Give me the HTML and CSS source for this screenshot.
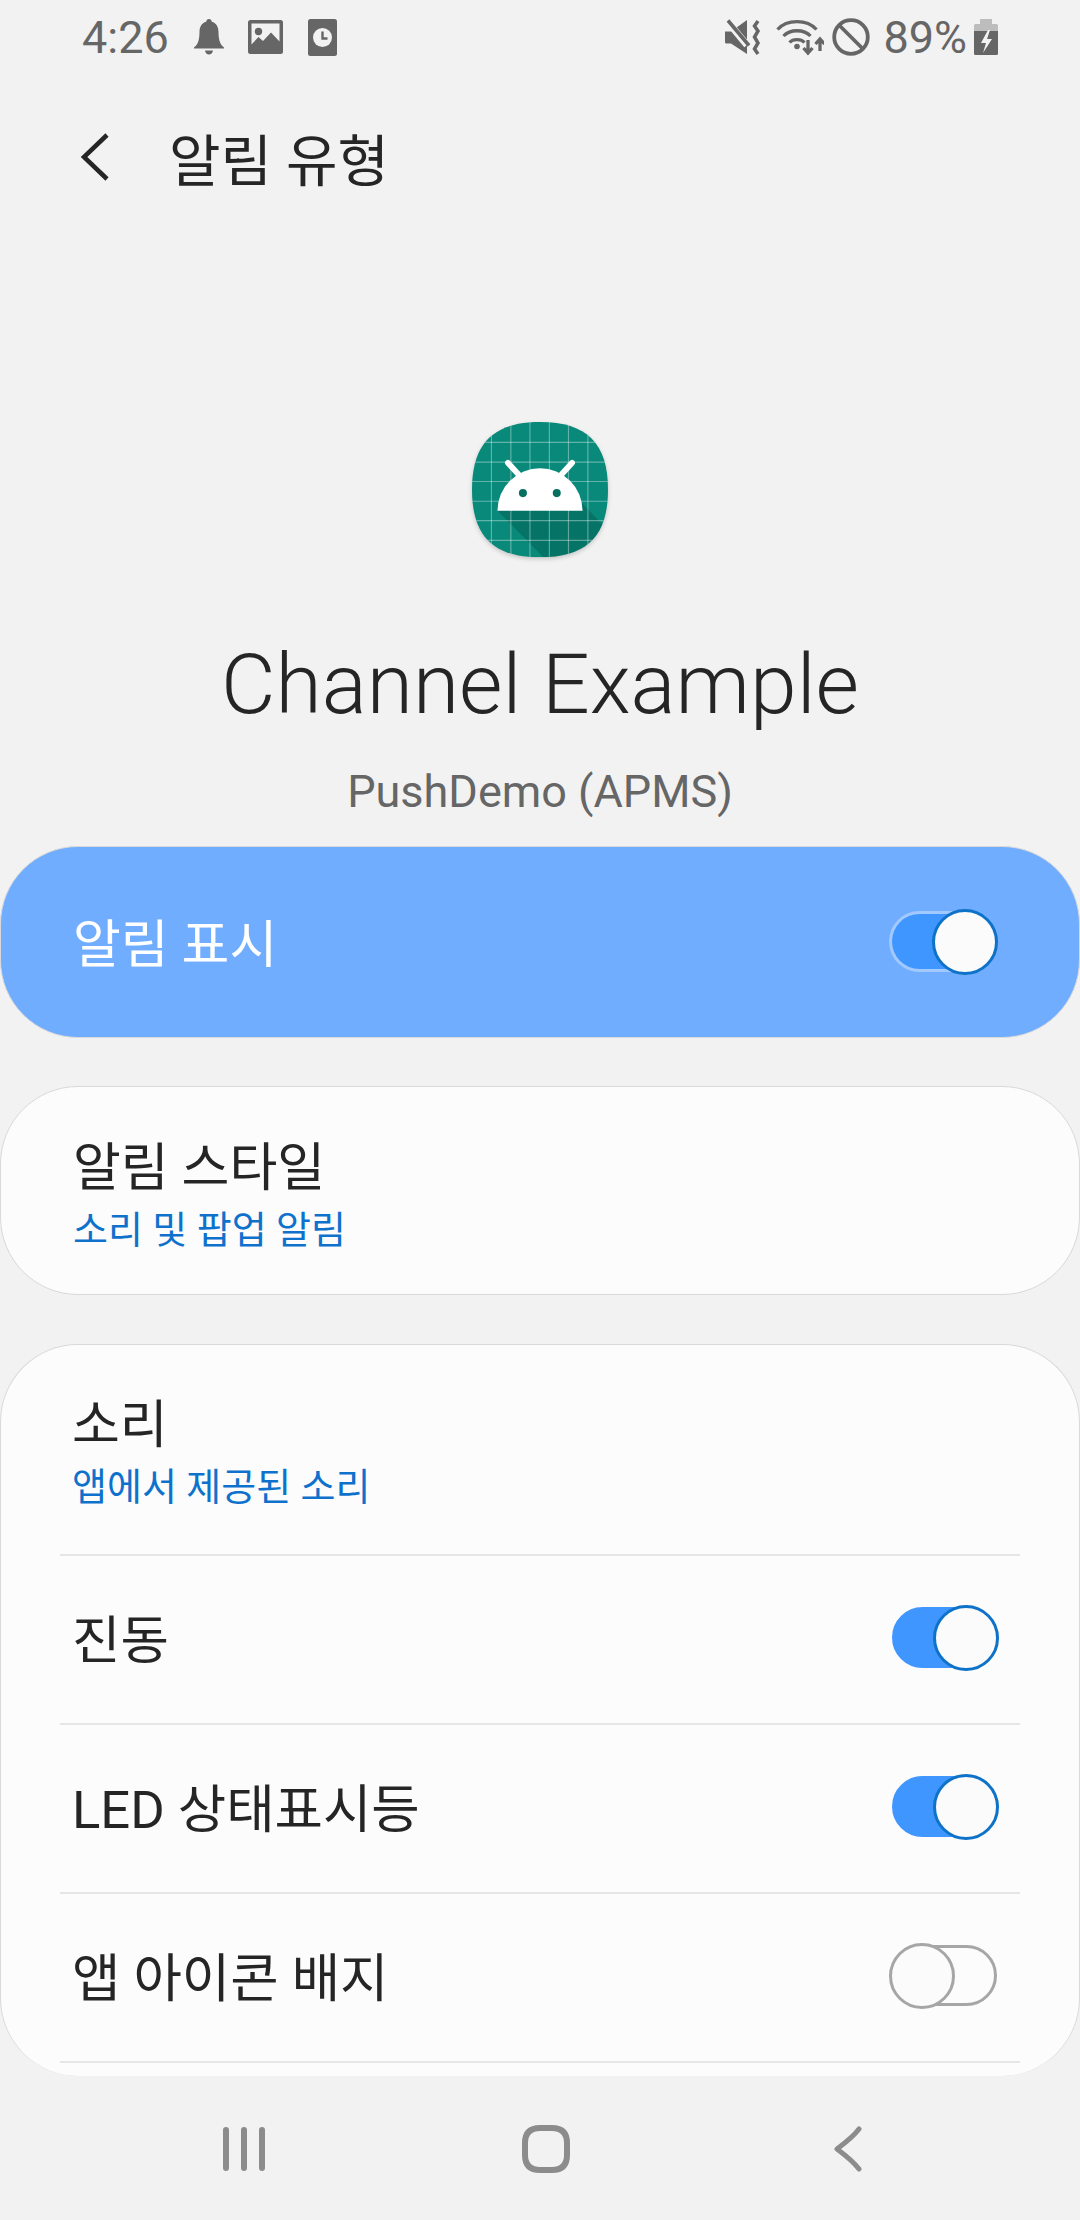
FILE: index.html
```html
<!DOCTYPE html>
<html lang="ko">
<head>
  <meta charset="UTF-8">
  <title>알림 유형</title>
  <link rel="stylesheet" href="styles.css">
</head>
<body>
  <!-- 상태 표시줄 -->
  <div class="status-bar">
    <span class="status-text time">4:26</span>
    <svg class="ic-bell" viewBox="0 0 30 36"><path d="M15 0c1.700 0 2.700 1.200 2.800 2.800 4.700 1.300 6.700 5.300 6.700 10.200 0 5.500 .8 9.300 2.300 12 .9 1.500 2.200 2.400 3.200 3.500v1H0v-1c1-1.100 2.300-2 3.200-3.500 1.500-2.700 2.300-6.500 2.300-12 0-4.900 2-8.900 6.700-10.200C12.300 1.200 13.300 0 15 0zM11 31.500h8c-.4 2.600-2 4-4 4s-3.600-1.400-4-4z"/></svg>
    <svg class="ic-pic" viewBox="0 0 35 34"><path fill-rule="evenodd" d="M2.500 0h30A2.500 2.500 0 0 1 35 2.500v29a2.500 2.500 0 0 1-2.500 2.500h-30A2.500 2.500 0 0 1 0 31.500v-29A2.500 2.500 0 0 1 2.500 0zM3.500 3.500v21l7-7.500 4.500 4 8-8.500 8.500 9V3.500z"/><circle cx="10.500" cy="11.500" r="3.700"/></svg>
    <svg class="ic-clock" viewBox="0 0 29 37"><rect width="29" height="37" rx="2.500"/><circle cx="14.500" cy="18.500" r="9.500" fill="#f2f2f2"/><path d="M14.500 12.500v7h5" fill="none" stroke="#666" stroke-width="2.400"/></svg>
    <div class="status-right">
      <svg class="ic-mute" viewBox="0 0 36 37"><path d="M0 12.500h6L22 1v34L6 24.500H1.500A1.500 1.500 0 0 1 0 23z"/><path d="M2 2l20 24" stroke="#f2f2f2" stroke-width="7" fill="none"/><path d="M3 1.500l21 25" stroke="#666" stroke-width="3.500" fill="none"/><path d="M33 2l-3.500 5 3.500 5-3.500 6 3.500 6-3.500 6 3.500 5" stroke="#666" stroke-width="3.500" fill="none"/></svg>
      <svg class="ic-wifi" viewBox="0 0 48 37" fill="none" stroke="#666" stroke-width="3.300"><path d="M1.500 10.500C11 0 31 0 40.500 10.500"/><path d="M7.500 17C14 10 28 10 34.500 17"/><path d="M13.500 23.500c3.500-3.800 11.500-3.800 15 0"/><circle cx="21" cy="27.500" r="2.800" fill="#666" stroke="none"/><path d="M32 21v12M27.500 29l4.500 5 4.500-5M44 32V20M39.500 25l4.500-5 4.500 5"/></svg>
      <svg class="ic-block" viewBox="0 0 38 38" fill="none" stroke="#666" stroke-width="3.800"><circle cx="19" cy="19" r="16.800"/><path d="M7 7l24 24"/></svg>
      <span class="status-text pct">89%</span>
      <svg class="ic-batt" viewBox="0 0 24 36"><path d="M6 0h12v5H6z" fill="#bdbdbd"/><path d="M1.500 5h21A1.500 1.500 0 0 1 24 6.500V12H0V6.500A1.500 1.500 0 0 1 1.500 5z" fill="#bdbdbd"/><path d="M0 12h24v22.500a1.500 1.500 0 0 1-1.500 1.500h-21A1.500 1.500 0 0 1 0 34.500z"/><path d="M14 11l-7 13h5l-3 10 9-14h-5l3-9z" fill="#f2f2f2"/></svg>
    </div>
  </div>

  <!-- 상단 타이틀 -->
  <div class="app-bar">
    <svg class="ic-up" viewBox="0 0 30 48" fill="none" stroke="#252525" stroke-width="4.500"><path d="M27 2L4 24l23 22"/></svg>
    <span class="app-title">알림 유형</span>
  </div>

  <div class="hero">
    <svg class="app-icon" viewBox="97 67 406 400" preserveAspectRatio="none">
      <defs>
        <clipPath id="squircle"><path d="M300 67C440 67 503 130 503 266C503 402 440 465 300 465C160 465 97 402 97 266C97 130 160 67 300 67Z"/></clipPath>
      </defs>
      <g clip-path="url(#squircle)">
        <rect x="97" y="67" width="406" height="400" fill="#08897a"/>
        <path d="M173 328L315 470H503V385L425 305Z" fill="#00463a" fill-opacity=".3"/>
        <g stroke="#fff" stroke-opacity=".36" stroke-width="3.500">
          <path d="M155 67V467M213 67V467M270 67V467M328 67V467M385 67V467M443 67V467"/>
          <path d="M97 127H503M97 185H503M97 242H503M97 300H503M97 357H503M97 415H503"/>
        </g>
      </g>
      <path d="M173 328A127 125 0 0 1 427 328Z" fill="#fff"/>
      <path d="M204 187L240 226M396 187L360 226" stroke="#fff" stroke-width="17" stroke-linecap="round"/>
      <circle cx="249" cy="276" r="12" fill="#05705f"/>
      <circle cx="350" cy="276" r="12" fill="#05705f"/>
    </svg>
    <div class="channel-name">Channel Example</div>
    <div class="app-name">PushDemo (APMS)</div>
  </div>

  <div class="card master">
    <span class="row-title">알림 표시</span>
    <div class="toggle on master-toggle"><div class="track"></div><div class="knob"></div></div>
  </div>

  <div class="card style-card">
    <div class="row-title">알림 스타일</div>
    <div class="row-sub">소리 및 팝업 알림</div>
  </div>

  <div class="card list-card">
    <div class="row sound-row">
      <div class="row-title">소리</div>
      <div class="row-sub">앱에서 제공된 소리</div>
    </div>
    <div class="row switch-row">
      <span class="row-title">진동</span>
      <div class="toggle on"><div class="track"></div><div class="knob"></div></div>
    </div>
    <div class="row switch-row">
      <span class="row-title">LED 상태표시등</span>
      <div class="toggle on"><div class="track"></div><div class="knob"></div></div>
    </div>
    <div class="row switch-row">
      <span class="row-title">앱 아이콘 배지</span>
      <div class="toggle"><div class="track"></div><div class="knob"></div></div>
    </div>
  </div>

  <!-- 하단 내비게이션 -->
  <div class="nav-bar">
    <div class="nav-item">
      <svg class="nav-recent" viewBox="0 0 44 46" fill="none" stroke="#8c8c8c" stroke-width="6" stroke-linecap="round"><path d="M4 4v38M22 4v38M40 4v38"/></svg>
    </div>
    <div class="nav-item">
      <svg class="nav-home" viewBox="0 0 48 48" fill="none" stroke="#8c8c8c" stroke-width="6"><path d="M18 3h12c10 0 15 5 15 15v12c0 10-5 15-15 15H18C8 45 3 40 3 30V18C3 8 8 3 18 3z"/></svg>
    </div>
    <div class="nav-item">
      <svg class="nav-back" viewBox="0 0 28 46" fill="none" stroke="#8c8c8c" stroke-width="5" stroke-linecap="round" stroke-linejoin="round"><path d="M25 3C19 11 11 17 3 23c8 6 16 12 22 20"/></svg>
    </div>
  </div>
</body>
</html>
```

FILE: styles.css
```css
* {
  box-sizing: border-box;
  margin: 0;
  padding: 0;
}

html, body {
  width: 1080px;
  height: 2220px;
  overflow: hidden;
}

body {
  background: #f2f2f2;
  font-family: Roboto, "Noto Sans CJK KR", sans-serif;
  color: #252525;
  display: flex;
  flex-direction: column;
}

svg {
  display: block;
  flex: none;
}

/* 상태 표시줄 */
.status-bar {
  height: 74px;
  padding: 0 82px;
  display: flex;
  align-items: center;
  fill: #666;
}

.status-text {
  font-size: 45px;
  line-height: 74px;
  color: #666;
  padding-top: 2px;
}

.time { margin-right: 25px; }

.ic-bell { width: 30px; height: 36px; margin-right: 24px; }
.ic-pic { width: 35px; height: 34px; margin-right: 25px; }
.ic-clock { width: 29px; height: 37px; }

.status-right {
  margin-left: auto;
  display: flex;
  align-items: center;
}

.ic-mute { width: 36px; height: 37px; margin-right: 15px; }
.ic-wifi { width: 48px; height: 37px; margin-right: 8px; }
.ic-block { width: 38px; height: 38px; margin-right: 13px; }
.pct { margin-right: 7px; }
.ic-batt { width: 24px; height: 36px; }

/* 상단 타이틀 */
.app-bar {
  height: 168px;
  padding: 0 0 3px 80px;
  display: flex;
  align-items: center;
}

.ic-up { width: 30px; height: 48px; margin-right: 59px; }

.app-title { font-size: 56px; }

.hero {
  padding-top: 180px;
  display: flex;
  flex-direction: column;
  align-items: center;
}

.app-icon {
  width: 136px;
  height: 136px;
  margin-bottom: -2px;
  filter: drop-shadow(0 2px 2px rgba(0, 0, 0, 0.18));
}

.channel-name {
  margin-top: 84px;
  font-size: 84px;
  line-height: 90px;
  font-weight: 300;
}

.app-name {
  margin-top: 37px;
  font-size: 45px;
  line-height: 50px;
  color: #666;
}

/* 카드 */
.card {
  background: #fcfcfc;
  border: 1px solid #d9d9d9;
  border-radius: 78px;
}

.master {
  margin-top: 29px;
  height: 192px;
  padding: 0 81px 0 72px;
  background: #70adff;
  display: flex;
  align-items: center;
  justify-content: space-between;
  color: #fff;
}

.style-card {
  margin-top: 48px;
  height: 209px;
  padding: 52px 72px 0;
}

.list-card {
  margin-top: 49px;
  height: 732px;
  flex: none;
  overflow: hidden;
  padding: 0 59px;
  border-bottom: 0;
}

.row-title {
  font-size: 52px;
  line-height: 60px;
}

.master .row-title {
  font-size: 52px;
  padding-top: 8px;
}

.switch-row .row-title {
  font-size: 52.6px;
  padding-top: 2px;
}

.row-sub {
  margin-top: 8px;
  font-size: 38px;
  line-height: 46px;
  color: #0e72cc;
}

.row {
  height: 169px;
  padding: 0 21px 0 12px;
  border-bottom: 2px solid #e6e6e6;
}

.sound-row {
  height: 211px;
  padding-top: 51px;
}

.switch-row {
  display: flex;
  align-items: center;
  justify-content: space-between;
}

/* 스위치 */
.toggle {
  position: relative;
  width: 110px;
  height: 66px;
}

.switch-row .toggle {
  margin-bottom: 3px;
}

.track {
  position: absolute;
  left: 1px;
  right: 2px;
  top: 2px;
  bottom: 3px;
  border: 3px solid #a6a6a6;
  border-radius: 31px;
}

.knob {
  position: absolute;
  left: 0;
  top: 0;
  width: 66px;
  height: 66px;
  border: 3px solid #a6a6a6;
  border-radius: 50%;
  background: #fbfbfb;
}

.toggle.on .track {
  background: #4096ff;
  border-color: #4096ff;
  left: 3px;
  right: 6px;
}

.toggle.on .knob {
  left: 44px;
  border-color: #0e72c8;
}

.master-toggle.on .track {
  border-color: rgba(255, 255, 255, 0.35);
  background: #4096ff;
  background-clip: padding-box;
  left: 1px;
}

/* 하단 내비게이션 */
.nav-bar {
  flex: 1;
  padding: 2px 0 0 12px;
  display: flex;
  justify-content: center;
  align-items: center;
}

.nav-item {
  width: 302px;
  display: flex;
  justify-content: center;
}

.nav-recent { width: 44px; height: 46px; }
.nav-home { width: 48px; height: 48px; }
.nav-back { width: 28px; height: 46px; }
```
